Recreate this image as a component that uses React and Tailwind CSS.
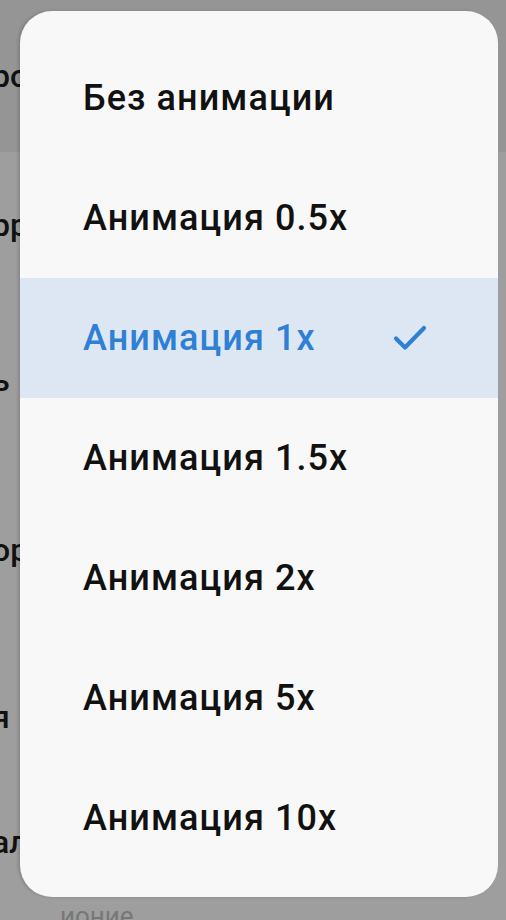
import React from 'react';

const options = [
  'Без анимации',
  'Анимация 0.5x',
  'Анимация 1x',
  'Анимация 1.5x',
  'Анимация 2x',
  'Анимация 5x',
  'Анимация 10x',
];

// Fragments of the settings page that peek out from behind the dialog
const backdropRows = [
  { text: 'ро', top: 'h-[152px] bg-[#959595]' },
  { text: 'рр', top: 'h-[145px]' },
  { text: 'ь', top: 'h-[165px]' },
  { text: 'ор', top: 'h-[175px]' },
  { text: 'я', top: 'h-[160px]' },
  { text: 'ал', top: 'h-[90px]' },
];

function Check() {
  return (
    <svg className="h-[28px] w-[36px]" viewBox="0 0 36 28" fill="none">
      <path d="M4 14.5l9 9L32 4" stroke="#2f80d4" strokeWidth={4.2} strokeLinecap="round" strokeLinejoin="round" />
    </svg>
  );
}

export default function App() {
  const selected = 2;

  return (
    <div className="relative h-[920px] w-[506px] overflow-hidden bg-[#9e9e9e]" style={{ fontFamily: 'Roboto, "Noto Sans", sans-serif' }}>
      {/* page behind the dialog */}
      <div className="flex flex-col">
        {backdropRows.map((row, i) => (
          <div key={i} className={`flex items-center ${row.top}`}>
            <span className="-ml-[8px] text-[32px] font-medium text-[#111]">{row.text}</span>
          </div>
        ))}
        <div className="pl-[60px] pt-[10px] text-[26px] text-[#777]">ионие</div>
      </div>

      {/* dialog */}
      <div className="absolute left-[20px] top-[11px] h-[886px] w-[478px] rounded-[32px] bg-[#f8f8f8] pt-[27px] shadow-[-2px_0_3px_rgba(0,0,0,0.15)]">
        {options.map((label, i) => {
          const active = i === selected;
          return (
            <div
              key={label}
              className={`flex h-[120px] items-center justify-between pl-[63px] pr-[70px] ${active ? 'bg-[#dde7f3]' : ''}`}
            >
              <span className={`text-[36px] font-medium leading-none tracking-[0.03em] ${active ? 'text-[#2f80d4]' : 'text-[#111111]'}`}>
                {label}
              </span>
              {active && <Check />}
            </div>
          );
        })}
      </div>
    </div>
  );
}
